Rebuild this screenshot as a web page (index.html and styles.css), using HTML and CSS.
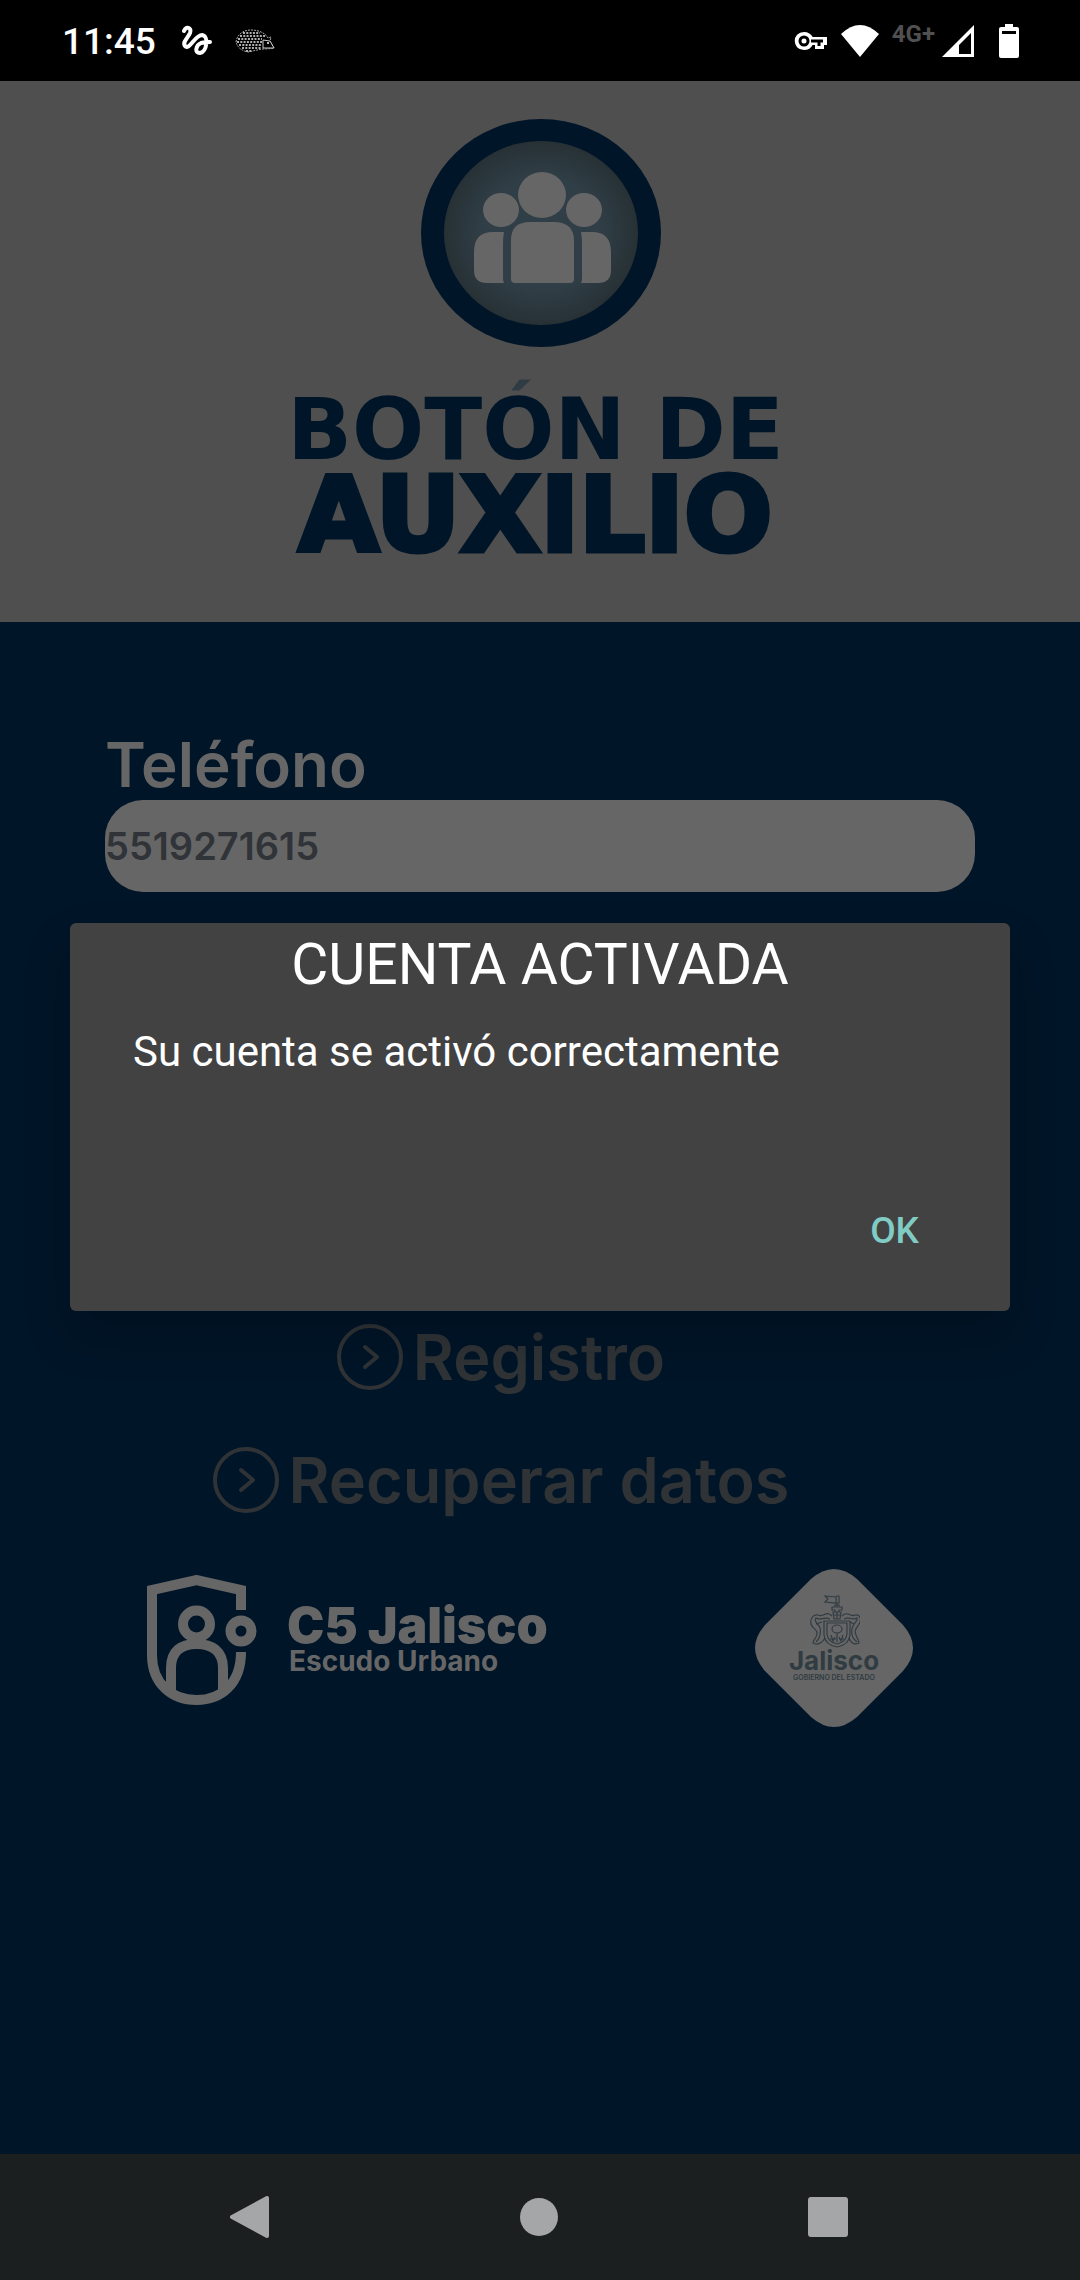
FILE: index.html
```html
<!DOCTYPE html>
<html lang="es">
<head>
<meta charset="utf-8">
<meta name="viewport" content="width=device-width, initial-scale=1">
<title>Botón de Auxilio</title>
<link rel="stylesheet" href="styles.css">
</head>
<body>
<div class="status-bar">
  <div class="status-left">
    <time class="clock">11:45</time>
    <svg class="squiggle" width="32" height="32" viewBox="0 0 32 32" fill="none" stroke="#fff" stroke-width="4" stroke-linecap="round" stroke-linejoin="round"><path d="M3 6C5 1 11 2 9 8C7 13 1 17 4 21C8 26 14 10 21 10C28 11 26 27 19 28C13 28 15 20 20 18C23 17 26 17 29 17"/></svg>
    <svg class="hedgehog" width="40" height="24" viewBox="0 0 40 24"><path d="M1 13C2 5 9 1 16 1C25 1 31 5 33 9L36 8L35 12L39 19Q34 20 27 20L13 23Q3 21 1 13Z" fill="none" stroke="#aaa" stroke-dasharray="2 1"/><path d="M8 4H25M5 7H30M3 10H27M2 13H27M4 16H27M7 19H26M11 22H17" stroke="#b0b0b0" stroke-width="2" stroke-dasharray="2 1.300"/><path d="M28 11L35 12L39 19H28Z" fill="#000" stroke="#ccc"/><circle cx="33" cy="14" r="1" fill="#fff"/></svg>
  </div>
  <div class="status-right">
    <svg class="key" width="34" height="22" viewBox="0 0 34 22"><path d="M10 3C15 3 17 6 18 8H32V14H29V18H22V14H18C16 18 13 19 10 19C-1 19-1 3 10 3Z" fill="#fff" stroke="#fff" stroke-width="2"/><circle cx="10" cy="11" r="4" fill="#fff" stroke="#000" stroke-width="3"/><path d="M17 11H29M25 11V16" stroke="#000" stroke-width="3"/></svg>
    <svg class="wifi" width="40" height="34" viewBox="0 0 40 34"><path d="M20 33L1 10Q20-8 39 10Z" fill="#fff"/></svg>
    <span class="network">4G+</span>
    <svg class="signal" width="34" height="34" viewBox="0 0 34 34"><path d="M33 1V33H1ZM30 9L18 21V30H30Z" fill="#fff" fill-rule="evenodd"/></svg>
    <svg width="20" height="34" viewBox="0 0 20 34"><path d="M6 0H14V3H18Q20 3 20 5V32Q20 34 18 34H2Q0 34 0 32V5Q0 3 2 3H6ZM3 7V10H17V7Z" fill="#fff" fill-rule="evenodd"/></svg>
  </div>
</div>

<div class="screen">
  <header class="brand">
    <svg class="emblem" width="240" height="228" viewBox="0 0 240 228" role="img" aria-label="Personas">
      <defs><radialGradient id="disc"><stop offset="0" stop-color="#303e47"/><stop offset=".6" stop-color="#303e47"/><stop offset="1" stop-color="#273135"/></radialGradient></defs>
      <ellipse cx="120" cy="114" rx="120" ry="114" fill="#001528"/>
      <ellipse cx="120" cy="114" rx="97" ry="92" fill="url(#disc)"/>
      <g fill="#666">
        <ellipse cx="121" cy="76" rx="24" ry="23"/>
        <ellipse cx="80" cy="91" rx="18" ry="17"/>
        <ellipse cx="163" cy="91" rx="18" ry="17"/>
        <path d="M90 121Q90 103 109 103H133Q153 103 153 122V160Q153 164 149 164H94Q90 164 90 160Z"/>
        <path d="M83 113H72Q53 113 53 133V151Q53 164 66 164H83Q82 162 82 158V126Q82 118 83 113Z"/>
        <path d="M160 113H171Q190 113 190 133V151Q190 164 177 164H160Q161 162 161 158V126Q161 118 160 113Z"/>
      </g>
    </svg>
    <h1 class="brand-name"><span class="brand-top">BOTÓN DE</span><span class="brand-bottom">AUXILIO</span></h1>
  </header>

  <main class="content">
    <form class="field">
      <label for="phone">Teléfono</label>
      <input id="phone" type="tel" value="5519271615">
    </form>
    <nav class="links">
      <a href="#registro"><svg width="66" height="66" viewBox="0 0 66 66"><circle cx="33" cy="33" r="31"/><path d="M28 23L40 33L28 43"/></svg>Registro</a>
      <a href="#recuperar"><svg width="66" height="66" viewBox="0 0 66 66"><circle cx="33" cy="33" r="31"/><path d="M28 23L40 33L28 43"/></svg>Recuperar datos</a>
    </nav>
    <footer class="partners">
      <div class="c5">
        <svg width="110" height="130" viewBox="0 0 110 130" fill="none" stroke="#666" stroke-width="10"><path d="M94 35V15L49.500 5L5 15V80C5 109 25 125 49.500 125C74 125 94 109 94 77"/><circle cx="49.500" cy="49" r="13.500"/><circle cx="94" cy="56" r="10.500"/><path d="M24 117V93C24 76 34 69 49.500 69C65 69 76 76 76 93V117"/></svg>
        <div class="c5-text"><strong>C5 Jalisco</strong><span>Escudo Urbano</span></div>
      </div>
      <div class="state">
        <svg class="state-shape" width="158" height="158" viewBox="0 0 158 158"><path d="M56 10Q79-10 102 10L148 56Q168 79 148 102L102 148Q79 168 56 148L10 102Q-10 79 10 56Z" fill="#666"/></svg>
        <div class="state-label">
          <svg width="52" height="54" viewBox="0 0 52 54" fill="none" stroke="#303c42" stroke-width="1.200"><path d="M17 2L28 3V9L17 8L20 5ZM28 2H31V9H28M29 9V14M24 13H27V11H31V13H34V16H31V18H27V16H24ZM25 18H33L32 25H26ZM25 21H33M29 18V25M16 27H42V41Q41 51 29 53Q17 51 16 41ZM19 29H39V40Q38 48 29 50Q20 48 19 40Z"/><ellipse cx="29" cy="35" rx="5" ry="4"/><path d="M24 22C18 16 15 24 10 21C5 20 2 25 3 30C5 36 10 35 9 40C8 45 5 46 5 49C10 52 15 48 17 44M34 22C40 16 43 24 47 21C52 20 54 25 51 30C48 35 46 36 48 41C50 46 51 47 51 49C45 52 42 47 41 44M22 25C16 22 12 27 8 24C5 28 11 30 12 34C13 39 12 44 8 48M36 25C42 22 44 27 49 24C50 28 44 30 44 35C43 40 45 45 49 48M8 30L14 28M46 30L42 28M29 39V48M23 41L25 47L27 43M35 41L33 47L31 43M22 45H28M31 45H36"/></svg>
          <strong>Jalisco</strong><small>GOBIERNO DEL ESTADO</small>
        </div>
      </div>
    </footer>
  </main>

  <div class="overlay">
    <section class="dialog" role="alertdialog" aria-labelledby="dialog-title" aria-describedby="dialog-text">
      <h2 id="dialog-title">CUENTA ACTIVADA</h2>
      <p id="dialog-text">Su cuenta se activó correctamente</p>
      <button type="button">OK</button>
    </section>
  </div>
</div>

<div class="system-nav">
  <button type="button" aria-label="Atrás"><svg width="42" height="42" viewBox="0 0 42 42"><path d="M38 2V40L3 21Z" stroke-width="4" stroke-linejoin="round"/></svg></button>
  <button type="button" aria-label="Inicio"><svg width="42" height="42" viewBox="0 0 42 42"><circle cx="21" cy="21" r="19"/></svg></button>
  <button type="button" aria-label="Recientes"><svg width="42" height="42" viewBox="0 0 42 42"><rect x="1" y="1" width="40" height="40" rx="3"/></svg></button>
</div>
</body>
</html>
```
FILE: styles.css
```css
* { box-sizing: border-box; }

body {
  margin: 0;
  min-height: 100vh;
  display: flex;
  flex-direction: column;
  background: #001528;
  font-family: Inter, "Liberation Sans", sans-serif;
}

svg { display: block; flex: none; }

/* System status bar */
.status-bar {
  height: 81px;
  padding: 0 61px 0 62px;
  display: flex;
  align-items: center;
  justify-content: space-between;
  background: #000;
  color: #fff;
  font-family: Roboto, sans-serif;
}
.status-left, .status-right { display: flex; align-items: center; }
.clock { font-size: 37px; line-height: 44px; font-weight: 500; padding-top: 2px; }
.squiggle { margin-left: 25px; }
.hedgehog { margin-left: 22px; }
.wifi { margin-left: 12px; }
.network {
  margin: 0 6px 14px 12px;
  color: #505050;
  font-size: 24px;
  line-height: 28px;
  font-weight: 700;
}
.signal { margin-right: 24px; }

/* App screen */
.screen {
  position: relative;
  flex: 1;
  display: flex;
  flex-direction: column;
}

.brand {
  display: flex;
  flex-direction: column;
  align-items: center;
  padding: 38px 0 70px;
  background: #4f4f4f;
  color: #001528;
}
.emblem { margin-left: 2px; }
.brand-name {
  margin: 23px 9px 0 0;
  display: flex;
  flex-direction: column;
  align-items: center;
  font-family: "DejaVu Sans", sans-serif;
  font-weight: 700;
}
.brand-top {
  padding-top: 12px;
  font-size: 85px;
  line-height: 96px;
  /* the accent takes the lighter tone of the emblem */
  background: linear-gradient(#303c44 25px, #001528 25px);
  background-clip: text;
  -webkit-background-clip: text;
  color: transparent;
}
.brand-bottom {
  font-size: 104px;
  line-height: 74px;
  -webkit-text-stroke: 5px #001528;
}

.content { flex: 1; display: flex; flex-direction: column; }

.field {
  padding: 108px 105px 0;
  display: flex;
  flex-direction: column;
}
.field label {
  color: #666;
  font-size: 62px;
  line-height: 70px;
  font-weight: 600;
}
.field input {
  width: 100%;
  height: 92px;
  padding: 0;
  border: 0;
  border-radius: 38px;
  background: #666;
  color: #303438;
  font: 600 38px/46px Inter, sans-serif;
}

.links {
  padding: 432px 78px 0 0;
  display: flex;
  flex-direction: column;
  align-items: center;
  gap: 57px;
}
.links a {
  display: flex;
  align-items: center;
  gap: 10px;
  color: #2f3336;
  font-size: 63px;
  line-height: 66px;
  font-weight: 600;
  text-decoration: none;
}
.links svg {
  fill: none;
  stroke: #2f3336;
  stroke-width: 4;
  stroke-linecap: round;
  stroke-linejoin: round;
}

.partners {
  padding: 56px 167px 60px 147px;
  display: flex;
  align-items: flex-start;
  justify-content: space-between;
  color: #666;
}
.c5 { padding-top: 6px; display: flex; align-items: flex-start; gap: 30px; }
.c5-text { padding-top: 26px; display: flex; flex-direction: column; }
.c5-text strong { font-size: 50px; line-height: 48px; font-weight: 900; }
.c5-text span { padding-left: 2px; font-size: 28px; line-height: 24px; font-weight: 700; }

.state { display: grid; justify-items: center; }
.state-shape, .state-label { grid-area: 1 / 1; }
.state-label {
  padding-top: 25px;
  display: flex;
  flex-direction: column;
  align-items: center;
  color: #303c42;
}
.state-label strong { font-size: 26px; line-height: 26px; font-weight: 700; }
.state-label small { font-size: 7px; line-height: 8px; font-weight: 600; }

/* Alert dialog */
.overlay {
  position: absolute;
  inset: 0;
  display: flex;
  align-items: center;
  padding: 0 70px 2px;
}
.dialog {
  width: 100%;
  min-height: 388px;
  padding: 9px 63px 44px;
  display: flex;
  flex-direction: column;
  border-radius: 6px;
  background: #424242;
  box-shadow: 0 24px 48px rgba(0, 0, 0, .2);
  color: #fff;
  font-family: Roboto, sans-serif;
}
.dialog h2 {
  margin: 0;
  font-size: 57px;
  line-height: 66px;
  font-weight: 400;
  text-align: center;
}
.dialog p { margin: 29px 0 0; font-size: 42px; line-height: 50px; }
.dialog button {
  margin-top: auto;
  align-self: flex-end;
  padding: 12px 28px;
  border: 0;
  background: none;
  color: #80cbc4;
  font: 500 37px/48px Roboto, sans-serif;
}

/* System navigation */
.system-nav {
  height: 126px;
  padding: 0 107px 0 105px;
  display: grid;
  grid-template-columns: repeat(3, 1fr);
  justify-items: center;
  background: #1c1f20;
}
.system-nav button { padding: 0; border: 0; background: none; }
.system-nav svg { fill: #a5a6a7; stroke: #a5a6a7; stroke-width: 0; }
```
